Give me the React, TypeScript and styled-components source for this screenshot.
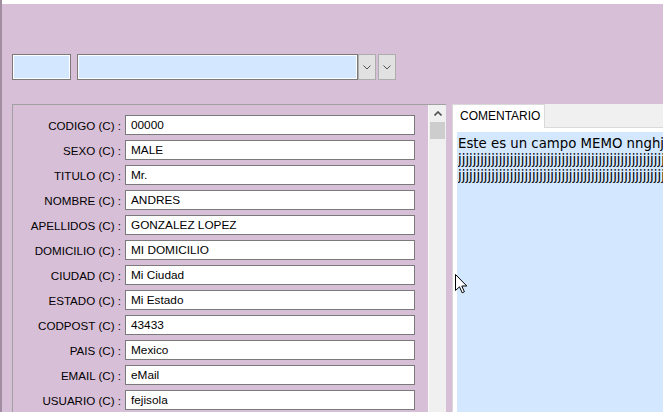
import React from 'react';
import styled, { createGlobalStyle } from 'styled-components';

const GlobalStyle = createGlobalStyle`
  html, body {
    margin: 0;
    padding: 0;
    background: #d8bfd8;
    overflow: hidden;
  }
`

const Window = styled.div`
  position: relative;
  width: 663px;
  height: 412px;
  box-sizing: border-box;
  border-left: 2px solid #a08ea0;
  background: #d8bfd8;
  overflow: hidden;
  display: flex;
  flex-direction: column;
  font-family: "Liberation Sans", Arial, sans-serif;
`

const TopStrip = styled.div`
  height: 4px;
  background: #ffffff;
  flex-shrink: 0;
`

const Toolbar = styled.div`
  display: flex;
  align-items: stretch;
  height: 26px;
  margin-top: 50px;
  padding-left: 10px;
  flex-shrink: 0;
`

const LookupInput = styled.div<{ $w: number; $gap?: number }>`
  width: ${p => p.$w}px;
  margin-right: ${p => p.$gap ?? 0}px;
  box-sizing: border-box;
  background: #d3e8fe;
  border: 1px solid #7a7a7a;
  box-shadow: inset 0 0 0 1px #ffffff;
`

const DropButton = styled.div<{ $gap?: number }>`
  width: 18px;
  margin-right: ${p => p.$gap ?? 0}px;
  box-sizing: border-box;
  background: #e1e1e1;
  border: 1px solid #adadad;
  display: flex;
  align-items: center;
  justify-content: center;
`

const Main = styled.div`
  display: flex;
  margin-top: 24px;
  padding-left: 10px;
  flex: 1;
  min-height: 0;
`

const FieldPanel = styled.div`
  width: 434px;
  box-sizing: border-box;
  border-top: 1px solid #a0a0a0;
  border-left: 1px solid #a0a0a0;
  display: flex;
  flex-shrink: 0;
  overflow: hidden;
`

const Fields = styled.div`
  flex: 1;
  display: flex;
  flex-direction: column;
  gap: 5px;
  padding-top: 10px;
`

const Row = styled.div`
  display: flex;
  align-items: center;
  height: 20px;
`

const Label = styled.div`
  width: 108px;
  margin-right: 4px;
  text-align: right;
  font-size: 11.6px;
  color: #000;
  white-space: nowrap;
`

const Value = styled.div`
  width: 290px;
  height: 20px;
  box-sizing: border-box;
  border: 1px solid #7a7a7a;
  background: #fff;
  padding-left: 5px;
  font-size: 11.8px;
  line-height: 18px;
  color: #000;
  white-space: nowrap;
`

const ScrollBar = styled.div`
  width: 17px;
  background: #f0f0f0;
  border-left: 1px solid #f8f8f8;
  display: flex;
  flex-direction: column;
  align-items: center;
  flex-shrink: 0;
`

const ScrollArrow = styled.div`
  height: 17px;
  width: 100%;
  display: flex;
  align-items: center;
  justify-content: center;
`

const ScrollThumb = styled.div`
  width: 15px;
  height: 17px;
  background: #cdcdcd;
`

const Tabs = styled.div`
  margin-left: 6px;
  width: 300px;
  flex-shrink: 0;
  display: flex;
  flex-direction: column;
`

const TabStrip = styled.div`
  display: flex;
  height: 23px;
  background: #f0f0f0;
  border-bottom: 1px solid #d9d9d9;
  flex-shrink: 0;
`

const Tab = styled.div`
  width: 93px;
  box-sizing: border-box;
  background: #fff;
  border: 1px solid #d9d9d9;
  border-bottom: none;
  margin-bottom: -1px;
  padding-left: 7px;
  font-size: 12px;
  line-height: 22px;
  color: #000;
`

const TabPage = styled.div`
  flex: 1;
  background: #fff;
  border-left: 1px solid #d9d9d9;
  padding: 4px 0 0 4px;
  display: flex;
`

const Memo = styled.div`
  flex: 1;
  background: #d3e8fe;
  padding: 4px 0 0 1px;
  font-family: "DejaVu Sans", Verdana, sans-serif;
  font-size: 13.3px;
  line-height: 16px;
  color: #000;
  overflow: hidden;
`

const MemoLine = styled.div`
  white-space: nowrap;
  overflow: hidden;
`

const Cursor = styled.svg`
  position: absolute;
  left: 453px;
  top: 274px;
`

const Chevron = ({ up }: { up?: boolean }) => (
  <svg width="8" height="5" viewBox="0 0 8 5">
    <path
      d={up ? 'M0.5 4.5 L4 1 L7.5 4.5' : 'M0.5 0.5 L4 4 L7.5 0.5'}
      fill="none"
      stroke="#505050"
      strokeWidth={up ? 1.6 : 1}
    />
  </svg>
)

const fields: [string, string][] = [
  ['CODIGO (C) :', '00000'],
  ['SEXO (C) :', 'MALE'],
  ['TITULO (C) :', 'Mr.'],
  ['NOMBRE (C) :', 'ANDRES'],
  ['APELLIDOS (C) :', 'GONZALEZ LOPEZ'],
  ['DOMICILIO (C) :', 'MI DOMICILIO'],
  ['CIUDAD (C) :', 'Mi Ciudad'],
  ['ESTADO (C) :', 'Mi Estado'],
  ['CODPOST (C) :', '43433'],
  ['PAIS (C) :', 'Mexico'],
  ['EMAIL (C) :', 'eMail'],
  ['USUARIO (C) :', 'fejisola'],
]

const js = 'j'.repeat(120)

export default function App() {
  return (
    <>
      <GlobalStyle />
      <Window>
        <TopStrip />
        <Toolbar>
          <LookupInput $w={59} $gap={6} />
          <LookupInput $w={281} />
          <DropButton $gap={2}><Chevron /></DropButton>
          <DropButton><Chevron /></DropButton>
        </Toolbar>
        <Main>
          <FieldPanel>
            <Fields>
              {fields.map(([label, value]) => (
                <Row key={label}>
                  <Label>{label}</Label>
                  <Value>{value}</Value>
                </Row>
              ))}
            </Fields>
            <ScrollBar>
              <ScrollArrow><Chevron up /></ScrollArrow>
              <ScrollThumb />
            </ScrollBar>
          </FieldPanel>
          <Tabs>
            <TabStrip>
              <Tab>COMENTARIO</Tab>
            </TabStrip>
            <TabPage>
              <Memo>
                <MemoLine>Este es un campo MEMO nnghj{js}</MemoLine>
                <MemoLine>{js}</MemoLine>
                <MemoLine>{js}</MemoLine>
              </Memo>
            </TabPage>
          </Tabs>
        </Main>
        <Cursor width="13" height="20" viewBox="0 0 13 20">
          <path
            d="M0.5 0.5 L0.5 16.5 L4.5 12.8 L7.2 18.8 L9.4 17.8 L6.8 12 L11.8 12 Z"
            fill="#fff"
            stroke="#000"
            strokeWidth="1"
          />
        </Cursor>
      </Window>
    </>
  );
}
